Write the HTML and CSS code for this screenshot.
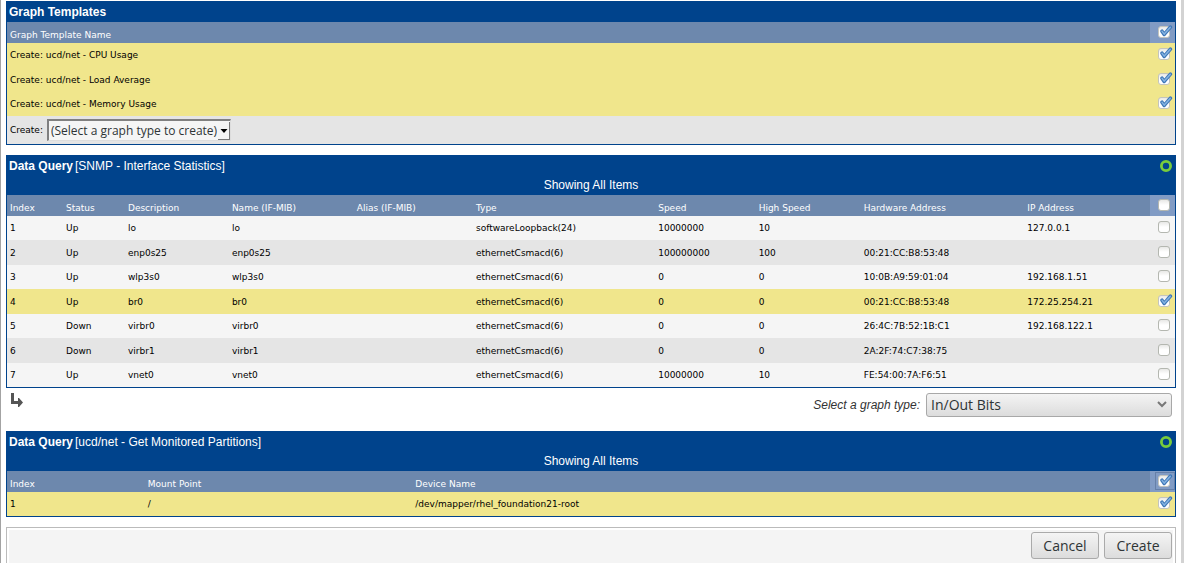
FILE: index.html
```html
<!DOCTYPE html>
<html lang="en">
<head>
<meta charset="utf-8">
<title>Create Graphs</title>
<link rel="stylesheet" href="styles.css">
<script src="tables.js" defer></script>
</head>
<body>
<svg class="defs" aria-hidden="true">
  <defs>
    <linearGradient id="box" x1="0" y1="0" x2="0" y2="1"><stop offset="0" stop-color="#e6e6e4"/><stop offset="0.5" stop-color="#fff"/></linearGradient>
    <symbol id="off" viewBox="0 0 16 14">
      <rect x="1.5" y="1.5" width="11" height="11" rx="2.5" fill="url(#box)" stroke="#b4b7b0"/>
    </symbol>
    <symbol id="on" viewBox="0 0 16 14">
      <rect x="1.5" y="1.5" width="11" height="11" rx="2.5" fill="url(#box)" stroke="#c3c4bd"/>
      <path d="M5 6.2 7.2 9.4 13.4 2.2" fill="none" stroke="#3f78b8" stroke-width="3.6" stroke-linecap="round" stroke-linejoin="round"/>
      <path d="M5.1 6.4 7.2 9.1 13.2 2.4" fill="none" stroke="#86b4e2" stroke-width="1.5" stroke-linecap="round" stroke-linejoin="round"/>
    </symbol>
  </defs>
</svg>
<main class="page">
  <section class="panel">
    <h2 class="title">Graph Templates</h2>
    <table class="grid" aria-label="Graph Templates">
      <colgroup><col><col class="tick-col"></colgroup>
      <thead><tr><th>Graph Template Name</th><th class="tick" data-check="on" data-label="Select all templates"></th></tr></thead>
      <tbody>
        <tr class="picked"><td>Create: ucd/net - CPU Usage</td><td class="tick" data-check="on" data-label="CPU Usage"></td></tr>
        <tr class="picked"><td>Create: ucd/net - Load Average</td><td class="tick" data-check="on" data-label="Load Average"></td></tr>
        <tr class="picked"><td>Create: ucd/net - Memory Usage</td><td class="tick" data-check="on" data-label="Memory Usage"></td></tr>
      </tbody>
    </table>
    <div class="create-row">
      <label for="template">Create:</label>
      <span class="classic-select">
        <select id="template"><option>(Select a graph type to create)</option></select>
        <svg class="drop" viewBox="0 0 12 18" aria-hidden="true"><path d="M0 0h12v18H0z" fill="#777"/><path d="M0 0h11v17H0z" fill="#f4f4f4"/><path d="M2.5 7h7L6 11z" fill="#000"/></svg>
      </span>
    </div>
  </section>

  <section class="panel">
    <h2 class="title">Data Query <span>[SNMP - Interface Statistics]</span>
      <a class="reload" href="#" aria-label="Reload query"><svg viewBox="0 0 12 12"><circle cx="6" cy="6" r="4.6" fill="none" stroke="#78cc3c" stroke-width="2.8"/></svg></a></h2>
    <p class="showing">Showing All Items</p>
    <table class="grid" aria-label="Interface Statistics">
      <colgroup><col class="w-index"><col class="w-status"><col class="w-desc"><col class="w-name"><col class="w-alias"><col class="w-type"><col class="w-speed"><col class="w-high"><col class="w-hw"><col><col class="tick-col"></colgroup>
      <thead><tr><th>Index</th><th>Status</th><th>Description</th><th>Name (IF-MIB)</th><th>Alias (IF-MIB)</th><th>Type</th><th>Speed</th><th>High Speed</th><th>Hardware Address</th><th>IP Address</th><th class="tick" data-check="off" data-label="Select all interfaces"></th></tr></thead>
      <tbody>
        <tr><td>1</td><td>Up</td><td>lo</td><td>lo</td><td></td><td>softwareLoopback(24)</td><td>10000000</td><td>10</td><td></td><td>127.0.0.1</td><td class="tick" data-check="off" data-label="lo"></td></tr>
        <tr><td>2</td><td>Up</td><td>enp0s25</td><td>enp0s25</td><td></td><td>ethernetCsmacd(6)</td><td>100000000</td><td>100</td><td>00:21:CC:B8:53:48</td><td></td><td class="tick" data-check="off" data-label="enp0s25"></td></tr>
        <tr><td>3</td><td>Up</td><td>wlp3s0</td><td>wlp3s0</td><td></td><td>ethernetCsmacd(6)</td><td>0</td><td>0</td><td>10:0B:A9:59:01:04</td><td>192.168.1.51</td><td class="tick" data-check="off" data-label="wlp3s0"></td></tr>
        <tr class="picked"><td>4</td><td>Up</td><td>br0</td><td>br0</td><td></td><td>ethernetCsmacd(6)</td><td>0</td><td>0</td><td>00:21:CC:B8:53:48</td><td>172.25.254.21</td><td class="tick" data-check="on" data-label="br0"></td></tr>
        <tr><td>5</td><td>Down</td><td>virbr0</td><td>virbr0</td><td></td><td>ethernetCsmacd(6)</td><td>0</td><td>0</td><td>26:4C:7B:52:1B:C1</td><td>192.168.122.1</td><td class="tick" data-check="off" data-label="virbr0"></td></tr>
        <tr><td>6</td><td>Down</td><td>virbr1</td><td>virbr1</td><td></td><td>ethernetCsmacd(6)</td><td>0</td><td>0</td><td>2A:2F:74:C7:38:75</td><td></td><td class="tick" data-check="off" data-label="virbr1"></td></tr>
        <tr><td>7</td><td>Up</td><td>vnet0</td><td>vnet0</td><td></td><td>ethernetCsmacd(6)</td><td>10000000</td><td>10</td><td>FE:54:00:7A:F6:51</td><td></td><td class="tick" data-check="off" data-label="vnet0"></td></tr>
      </tbody>
    </table>
  </section>

  <div class="type-row">
    <svg class="elbow" viewBox="0 0 14 14" aria-hidden="true"><path d="M1 0h3v8h4V5h1l4 4.5L9 14H8v-3H1z" fill="#555"/></svg>
    <label for="graph-type">Select a graph type:</label>
    <span class="soft-select">
      <select id="graph-type"><option>In/Out Bits</option></select>
      <svg class="chevron" viewBox="0 0 10 7" aria-hidden="true"><path d="M1 1l4 4 4-4" fill="none" stroke="#777" stroke-width="2"/></svg>
    </span>
  </div>

  <section class="panel">
    <h2 class="title">Data Query <span>[ucd/net - Get Monitored Partitions]</span>
      <a class="reload" href="#" aria-label="Reload query"><svg viewBox="0 0 12 12"><circle cx="6" cy="6" r="4.6" fill="none" stroke="#78cc3c" stroke-width="2.8"/></svg></a></h2>
    <p class="showing">Showing All Items</p>
    <table class="grid" aria-label="Monitored Partitions">
      <colgroup><col class="w-part"><col class="w-mount"><col><col class="tick-col"></colgroup>
      <thead><tr><th>Index</th><th>Mount Point</th><th>Device Name</th><th class="tick focused" data-check="on" data-label="Select all partitions"></th></tr></thead>
      <tbody><tr class="picked"><td>1</td><td>/</td><td>/dev/mapper/rhel_foundation21-root</td><td class="tick" data-check="on" data-label="Root partition"></td></tr></tbody>
    </table>
  </section>

  <footer class="actions">
    <div class="actions-inner"><button type="button">Cancel</button><button type="button">Create</button></div>
  </footer>
</main>
</body>
</html>
```
FILE: styles.css
```css
* { box-sizing: border-box; }
html { background: #fff; }
body {
  margin: 0;
  min-height: 100vh;
  border-left: 1px solid #a3a3a3;
  border-right: 3px solid #d3d3d3;
  font: 12px/16px "Liberation Sans", Arial, sans-serif;
  color: #000;
  overflow: hidden;
}
.defs { position: absolute; width: 0; height: 0; }
.page { padding: 1px 5px 0; }
.panel { border: 1px solid #00438c; margin-bottom: 10px; }
.title {
  display: flex;
  gap: 2px;
  height: 20px;
  margin: 0;
  padding: 2px 3px 0 2px;
  background: #00438c;
  color: #fff;
  font-size: 12px;
  line-height: 16px;
}
.title span { font-weight: normal; }
.reload { margin-left: auto; padding-top: 2px; }
.reload svg { display: block; width: 12px; height: 12px; }
.showing {
  height: 19px;
  margin: 0;
  padding-top: 1px;
  background: #00438c;
  color: #fff;
  text-align: center;
}
.grid {
  width: 100%;
  table-layout: fixed;
  border-collapse: collapse;
  font: 9px/12px "DejaVu Sans", Verdana, sans-serif;
}
.w-index { width: 4.8%; }
.w-status { width: 5.3%; }
.w-desc { width: 8.9%; }
.w-name { width: 10.7%; }
.w-alias { width: 10.2%; }
.w-type { width: 15.6%; }
.w-speed { width: 8.6%; }
.w-high { width: 9%; }
.w-hw { width: 14%; }
.w-part { width: 11.8%; }
.w-mount { width: 22.9%; }
.tick-col { width: 25px; }
.grid th {
  height: 21px;
  padding: 4px 3px 0;
  background: #6d88ad;
  color: #fff;
  font-weight: normal;
  text-align: left;
}
.grid td { height: 24px; padding: 0 3px; }
.grid tbody tr { background: #f5f5f5; }
.grid tbody tr:nth-child(even) { background: #e5e5e5; }
.grid tbody tr:nth-child(even) td { height: 25px; }
.grid tbody tr.picked { background: #f0e68c; }
.grid .tick { padding: 0 1px 2px 7px; }
.grid th.tick { background: #819bc4; }
.check { display: grid; width: 16px; height: 14px; }
.check input { appearance: none; margin: 0; grid-area: 1 / 1; }
.check svg { grid-area: 1 / 1; width: 16px; height: 14px; pointer-events: none; }
.focused .check { outline: 1px solid #6680a8; outline-offset: 1px; }
.create-row {
  display: flex;
  align-items: center;
  gap: 4px;
  height: 28px;
  padding-left: 3px;
  background: #e5e5e5;
  font: 9px/12px "DejaVu Sans", Verdana, sans-serif;
}
.classic-select {
  display: flex;
  align-items: center;
  height: 22px;
  border: 1px solid #808080;
  border-top-width: 2px;
  border-left-width: 2px;
  border-right-color: #ddd;
  border-bottom-color: #ddd;
  background: #f5f5f5;
}
select { appearance: none; border: 0; background: none; margin: 0; padding: 0; color: #2e3436; }
.classic-select select { width: 169px; padding-left: 2px; font: 12px/18px "Open Sans", sans-serif; }
.drop { width: 12px; height: 18px; }
.type-row {
  display: flex;
  align-items: center;
  height: 33px;
  margin: -10px 4px 10px;
  color: #333;
  font-style: italic;
}
.elbow { width: 14px; height: 14px; margin-bottom: 10px; }
.type-row label { margin-left: auto; margin-right: 6px; }
.soft-select {
  display: flex;
  align-items: center;
  width: 246px;
  height: 24px;
  padding: 0 4px;
  border: 1px solid #a8a8a8;
  border-radius: 3px;
  background: linear-gradient(#f4f4f4, #dcdcdc);
}
.soft-select select { flex: 1; font: 14px/20px "Open Sans", sans-serif; }
.chevron { width: 10px; height: 7px; }
.actions { border: 1px solid #bbb; border-bottom: 0; padding: 2px 2px 0; }
.actions-inner {
  display: flex;
  justify-content: flex-end;
  gap: 5px;
  height: 40px;
  padding: 2px 1px;
  background: #f4f4f4;
}
button {
  width: 68px;
  height: 27px;
  padding: 0;
  border: 1px solid #aaa;
  border-radius: 3px;
  background: linear-gradient(#f4f4f4, #dcdcdc);
  color: #2e3436;
  font: 14px/20px "Open Sans", sans-serif;
}
```
FILE: tables.js
```js
// Fill every tick cell with a labelled checkbox and its drawn box.
document.querySelectorAll("[data-check]").forEach((cell) => {
  const label = document.createElement("label");
  label.className = "check";
  const input = document.createElement("input");
  input.type = "checkbox";
  input.checked = cell.dataset.check === "on";
  input.setAttribute("aria-label", cell.dataset.label);
  label.append(input);
  label.insertAdjacentHTML("beforeend", '<svg aria-hidden="true"><use href="#' + cell.dataset.check + '"/></svg>');
  const use = label.querySelector("use");
  input.addEventListener("change", () => use.setAttribute("href", input.checked ? "#on" : "#off"));
  cell.append(label);
});
```
